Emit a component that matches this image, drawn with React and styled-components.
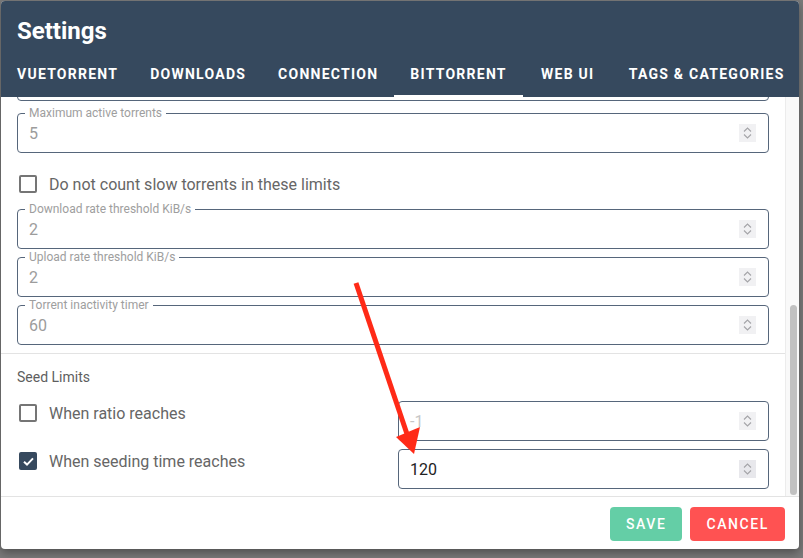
import React, { useLayoutEffect, useRef } from "react"
import styled, { createGlobalStyle } from "styled-components"

const GlobalStyle = createGlobalStyle`
  html, body {
    margin: 0;
    padding: 0;
    background: #7a7a7a;
    font-family: Roboto, "Liberation Sans", sans-serif;
  }
  * { box-sizing: border-box; }
`

const tabs = ["VueTorrent", "Downloads", "Connection", "BitTorrent", "Web UI", "Tags & Categories"]

const Chevrons = () => (
  <svg width="17" height="18" viewBox="0 0 17 18">
    <path d="M5 7.5 L8.5 4 L12 7.5" fill="none" stroke="#a4a4a8" strokeWidth="1.1" />
    <path d="M5 10.5 L8.5 14 L12 10.5" fill="none" stroke="#a4a4a8" strokeWidth="1.1" />
  </svg>
)

const NumberField = ({ label, value, tone, mt }) => (
  <Field $mt={mt}>
    {label && <FieldLabel>{label}</FieldLabel>}
    <FieldValue $tone={tone}>{value}</FieldValue>
    <Spinner $active={tone === "active"}>
      <Chevrons />
    </Spinner>
  </Field>
)

const Check = ({ checked, label, mt }) => (
  <CheckRow $mt={mt}>
    <Box $checked={checked}>
      {checked && (
        <svg width="13" height="13" viewBox="0 0 13 13">
          <path d="M2 6.8 L5 9.6 L11 3.4" fill="none" stroke="#fff" strokeWidth="2" />
        </svg>
      )}
    </Box>
    <span>{label}</span>
  </CheckRow>
)

export default function App() {
  const scroller = useRef(null)

  useLayoutEffect(() => {
    if (scroller.current) scroller.current.scrollTop = scroller.current.scrollHeight
  }, [])

  return (
    <Page>
      <GlobalStyle />
      <Dialog>
        <Header>
          <Title>Settings</Title>
          <Tabs>
            {tabs.map((t) => (
              <Tab key={t} $active={t === "BitTorrent"}>{t}</Tab>
            ))}
          </Tabs>
        </Header>

        <Body>
          <Scroller ref={scroller}>
            <Content>
              <SectionTitle $mt={36}>Privacy</SectionTitle>
              <Check label="Enable DHT (decentralized network) to find more peers" mt={12} />
              <Check label="Enable Peer Exchange (PeX) to find more peers" mt={12} />
              <Check label="Enable Local Peer Discovery to find more peers" mt={12} />
              <NumberField label="Encryption mode" value="Allow encryption" tone="muted" mt={16} />
              <Check label="Enable anonymous mode" mt={12} />
              <Divider $mt={12} />
              <SectionTitle $mt={13}>Torrent Queueing</SectionTitle>
              <Check label="Torrent Queueing" mt={14} />
              <NumberField label="Maximum active downloads" value="3" tone="muted" mt={15} />
              <NumberField label="Maximum active uploads" value="3" tone="muted" mt={8} />

              <NumberField label="Maximum active torrents" value="5" tone="muted" mt={12} />
              <Check label="Do not count slow torrents in these limits" mt={19} />
              <NumberField label="Download rate threshold KiB/s" value="2" tone="muted" mt={13} />
              <NumberField label="Upload rate threshold KiB/s" value="2" tone="muted" mt={8} />
              <NumberField label="Torrent inactivity timer" value="60" tone="muted" mt={8} />
              <Divider $mt={8} />
              <SectionTitle $mt={13}>Seed Limits</SectionTitle>
              <SplitRow $mt={14}>
                <Check label="When ratio reaches" />
                <NumberField value="-1" tone="disabled" />
              </SplitRow>
              <SplitRow $mt={8}>
                <Check label="When seeding time reaches" checked />
                <NumberField value="120" tone="active" />
              </SplitRow>
            </Content>
          </Scroller>
          <ScrollTrack>
            <ScrollThumb />
          </ScrollTrack>
        </Body>

        <Footer>
          <Button $color="#64cea6">Save</Button>
          <Button $color="#ff5252">Cancel</Button>
        </Footer>
      </Dialog>

      <Annotation width="803" height="558" viewBox="0 0 803 558">
        <line x1="356" y1="283" x2="407" y2="434" stroke="#ff2a17" strokeWidth="5" />
        <polygon points="396,437 420,427 414,454" fill="#ff2a17" />
      </Annotation>
    </Page>
  )
}

const Page = styled.div`
  position: relative;
  width: 803px;
  height: 558px;
  padding: 1px 0 0 1px;
  overflow: hidden;
`

const Dialog = styled.div`
  width: 798px;
  height: 548px;
  display: flex;
  flex-direction: column;
  background: #fff;
  border-radius: 4px;
  overflow: hidden;
  box-shadow: 0 4px 10px rgba(0, 0, 0, 0.35);
`

const Header = styled.div`
  background: #36495e;
  color: #fff;
  flex: none;
`

const Title = styled.div`
  padding: 16px 16px 4px;
  font-size: 24px;
  line-height: 28px;
  font-weight: 700;
`

const Tabs = styled.div`
  display: flex;
  height: 48px;
  overflow: hidden;
`

const Tab = styled.div`
  flex: none;
  min-width: 90px;
  padding: 3px 16px 0;
  display: flex;
  align-items: center;
  justify-content: center;
  font-size: 14px;
  font-weight: 700;
  letter-spacing: 1.25px;
  white-space: nowrap;
  text-transform: uppercase;
  border-bottom: 2px solid ${({ $active }) => ($active ? "#fff" : "transparent")};
`

const Body = styled.div`
  flex: none;
  height: 399px;
  display: flex;
`

const Scroller = styled.div`
  flex: 1;
  overflow: hidden;
`

const ScrollTrack = styled.div`
  width: 14px;
  flex: none;
  display: flex;
  flex-direction: column;
  justify-content: flex-end;
  padding: 0 2px 1px 4px;
  background: #f9f9f9;
  border-left: 1px solid #ececec;
`

const ScrollThumb = styled.div`
  height: 190px;
  border-radius: 4px;
  background: #c1c1c1;
`

const Content = styled.div`
  display: flex;
  flex-direction: column;
  padding: 0 16px 7px;
`

const SectionTitle = styled.div`
  margin-top: ${({ $mt }) => $mt || 0}px;
  font-size: 14px;
  line-height: 20px;
  color: #5e5e5e;
`

const Divider = styled.div`
  margin: ${({ $mt }) => $mt || 0}px -16px 0;
  height: 1px;
  background: #e3e3e3;
`

const Field = styled.div`
  position: relative;
  margin-top: ${({ $mt }) => $mt || 0}px;
  height: 40px;
  border: 1px solid #56667b;
  border-radius: 4px;
  display: flex;
  align-items: center;
  padding: 0 12px 0 11px;
`

const FieldLabel = styled.span`
  position: absolute;
  top: -8px;
  left: 7px;
  padding: 0 4px;
  background: #fff;
  font-size: 12px;
  line-height: 14px;
  color: #9e9e9e;
`

const FieldValue = styled.span`
  flex: 1;
  font-size: 16px;
  color: ${({ $tone }) =>
    $tone === "active" ? "#222" : $tone === "disabled" ? "#c6c6c6" : "#9c9c9c"};
`

const Spinner = styled.div`
  width: 17px;
  height: 18px;
  display: flex;
  background: ${({ $active }) => ($active ? "#e8e8ec" : "#f1f1f3")};
`

const CheckRow = styled.label`
  margin-top: ${({ $mt }) => $mt || 0}px;
  height: 24px;
  display: flex;
  align-items: center;
  gap: 12px;
  padding-left: 2px;
  font-size: 16px;
  color: #666;
  white-space: nowrap;
`

const Box = styled.span`
  width: 18px;
  height: 18px;
  flex: none;
  display: flex;
  align-items: center;
  justify-content: center;
  border-radius: 2px;
  border: ${({ $checked }) => ($checked ? "none" : "2px solid #757575")};
  background: ${({ $checked }) => ($checked ? "#36495e" : "transparent")};
`

const SplitRow = styled.div`
  margin-top: ${({ $mt }) => $mt || 0}px;
  display: grid;
  grid-template-columns: 1fr 1fr;
  column-gap: 10px;
  align-items: start;
`

const Footer = styled.div`
  flex: 1;
  border-top: 1px solid #e3e3e3;
  display: flex;
  justify-content: flex-end;
  align-items: center;
  gap: 8px;
  padding: 2px 14px 0 0;
`

const Button = styled.button`
  height: 34px;
  padding: 0 16px;
  border: none;
  border-radius: 4px;
  background: ${({ $color }) => $color};
  color: #fff;
  font-family: Roboto, "Liberation Sans", sans-serif;
  font-size: 14px;
  font-weight: 500;
  letter-spacing: 1.6px;
  text-transform: uppercase;
`

const Annotation = styled.svg`
  position: absolute;
  left: 0;
  top: 0;
  pointer-events: none;
`
